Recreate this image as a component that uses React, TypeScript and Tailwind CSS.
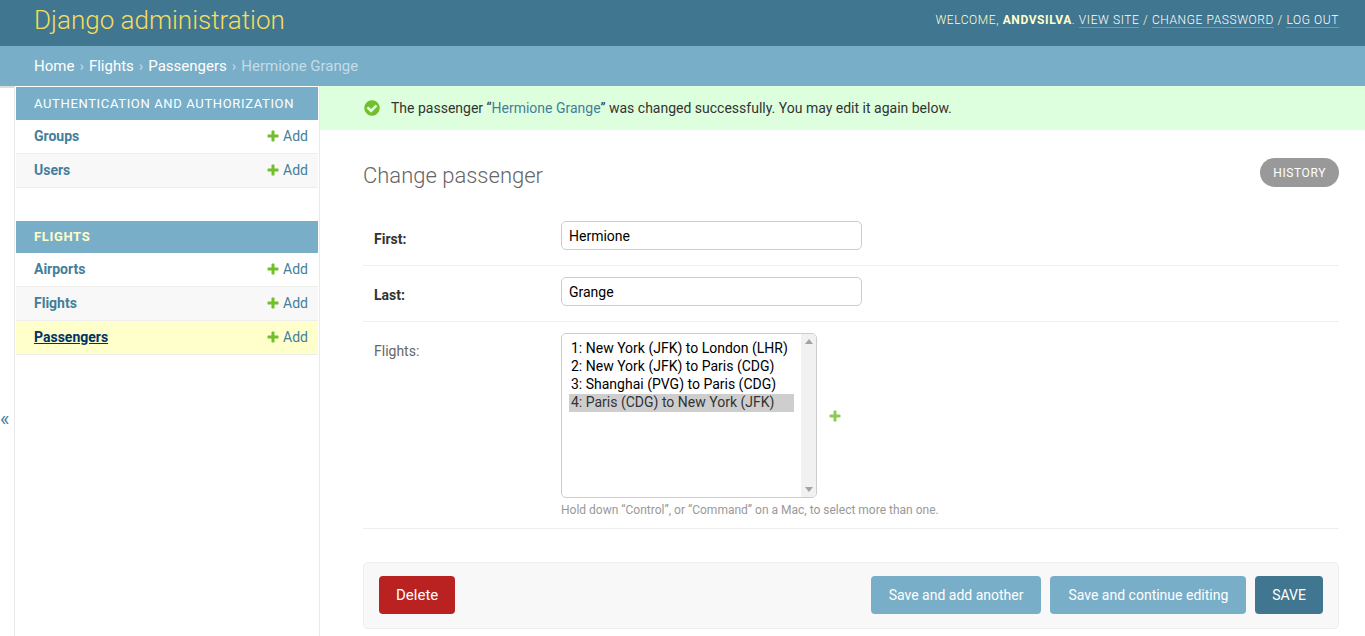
import React from 'react';

type Model = { name: string; current?: boolean };
type AppModule = { title: string; current?: boolean; models: Model[] };

const modules: AppModule[] = [
  { title: 'Authentication and Authorization', models: [{ name: 'Groups' }, { name: 'Users' }] },
  {
    title: 'Flights',
    current: true,
    models: [{ name: 'Airports' }, { name: 'Flights' }, { name: 'Passengers', current: true }],
  },
];

const flights = [
  '1: New York (JFK) to London (LHR)',
  '2: New York (JFK) to Paris (CDG)',
  '3: Shanghai (PVG) to Paris (CDG)',
  '4: Paris (CDG) to New York (JFK)',
];

function PlusIcon({ className }: { className: string }) {
  return (
    <svg viewBox="0 0 1792 1792" className={className} aria-hidden="true">
      <path
        fill="#70bf2b"
        d="M1600 796v192q0 40-28 68t-68 28h-416v416q0 40-28 68t-68 28h-192q-40 0-68-28t-28-68v-416h-416q-40 0-68-28t-28-68v-192q0-40 28-68t68-28h416v-416q0-40 28-68t68-28h192q40 0 68 28t28 68v416h416q40 0 68 28t28 68z"
      />
    </svg>
  );
}

function CheckIcon() {
  return (
    <svg viewBox="0 0 1792 1792" className="size-[18px]" aria-hidden="true">
      <path
        fill="#70bf2b"
        d="M1412 734q0-28-18-46l-91-90q-19-19-45-19t-45 19l-408 407-226-226q-19-19-45-19t-45 19l-91 90q-18 18-18 46 0 27 18 45l362 362q19 19 45 19 27 0 46-19l543-543q18-18 18-45zm252 162q0 209-103 385.500t-279.500 279.500-385.500 103-385.500-103-279.500-279.500-103-385.500 103-385.500 279.500-279.500 385.500-103 385.500 103 279.500 279.500 103 385.500z"
      />
    </svg>
  );
}

function NavModule({ title, current, models }: AppModule) {
  return (
    <section className="mb-[33px]">
      <h2
        className={`flex items-center bg-[#79aec8] px-[18px] text-[13px] uppercase tracking-wider ${
          current ? 'h-8 font-bold text-[#ffffcc]' : 'h-[33px] font-normal text-white'
        }`}
      >
        <a href="#">{title}</a>
      </h2>
      <ul>
        {models.map((m) => (
          <li
            key={m.name}
            className={`flex h-[34px] items-center justify-between border-b border-[#eeeeee] pb-[2px] pl-[18px] pr-[10px] text-[#447e9b] ${
              m.current ? 'bg-[#ffffcc]' : 'bg-white even:bg-[#f8f8f8]'
            }`}
          >
            <a href="#" className={`font-bold ${m.current ? 'text-[#003366] underline' : ''}`}>
              {m.name}
            </a>
            <a href="#" className="flex items-center gap-[3px]">
              <PlusIcon className="size-[14px]" />
              Add
            </a>
          </li>
        ))}
      </ul>
    </section>
  );
}

function TextRow({ id, label, value }: { id: string; label: string; value: string }) {
  return (
    <div className="flex h-14 items-start border-b border-[#eeeeee] pl-[11px] pt-[11px]">
      <label htmlFor={id} className="w-[187px] shrink-0 pt-[9px] font-bold">
        {label}
      </label>
      <input
        id={id}
        defaultValue={value}
        className="h-[29px] w-[301px] rounded-[5px] border border-[#cccccc] bg-white px-[7px] text-black"
      />
    </div>
  );
}

function UserLink({ children }: { children: React.ReactNode }) {
  return (
    <a href="#" className="border-b border-white/25 text-white">
      {children}
    </a>
  );
}

export default function App() {
  return (
    <div className="flex min-h-screen flex-col bg-white font-['Roboto',sans-serif] text-sm leading-[18px] text-[#333333]">
      <header className="flex h-[46px] items-center justify-between bg-[#417690] pb-[6px] pl-[34px] pr-[26px] text-[#ffffcc]">
        <h1 className="text-[26px] font-light leading-8 text-[#f5dd5d]">
          <a href="#">Django administration</a>
        </h1>
        <div className="text-xs font-light uppercase leading-[14px] tracking-wider">
          Welcome, <strong className="font-bold">andvsilva</strong>. <UserLink>View site</UserLink> /{' '}
          <UserLink>Change password</UserLink> / <UserLink>Log out</UserLink>
        </div>
      </header>

      <nav aria-label="Breadcrumbs" className="flex h-10 items-center gap-[5px] bg-[#79aec8] px-[34px] text-[15px] text-[#c4dce8]">
        <a href="#" className="text-white">Home</a>
        <span>›</span>
        <a href="#" className="text-white">Flights</a>
        <span>›</span>
        <a href="#" className="text-white">Passengers</a>
        <span>›</span>
        <span>Hermione Grange</span>
      </nav>

      <div className="flex flex-1">
        <button
          type="button"
          aria-label="Toggle navigation"
          className="flex w-[15px] shrink-0 items-center justify-start border-r border-t-2 border-r-[#eaeaea] border-t-[#dddddd] pt-[114px] text-[20px] leading-6 text-[#447e9b]"
        >
          «
        </button>
        <nav aria-label="Models" className="w-[305px] shrink-0 border-r border-[#eaeaea] px-px pt-px">
          {modules.map((m) => (
            <NavModule key={m.title} {...m} />
          ))}
        </nav>

        <main className="min-w-0 flex-1">
          <p className="flex h-11 items-center gap-[10px] bg-[#ddffdd] pl-[43px] pr-[26px]">
            <CheckIcon />
            <span>
              The passenger “<a href="#" className="text-[#447e9b]">Hermione Grange</a>” was changed
              successfully. You may edit it again below.
            </span>
          </p>

          <div className="pb-[7px] pl-[43px] pr-[26px] pt-7">
            <div className="flex items-start justify-between">
              <h2 className="pt-[6px] text-[22px] font-light leading-[23px] text-[#666666]">Change passenger</h2>
              <a
                href="#"
                className="flex h-[29px] items-center rounded-full bg-[#999999] px-[13px] text-xs uppercase tracking-wider text-white"
              >
                History
              </a>
            </div>

            <form className="pt-[23px]" onSubmit={(e) => e.preventDefault()}>
              <TextRow id="first" label="First:" value="Hermione" />
              <TextRow id="last" label="Last:" value="Grange" />
              <div className="flex items-start border-b border-[#eeeeee] pb-[9px] pl-[11px] pt-[11px]">
                <label htmlFor="flights" className="w-[187px] shrink-0 pt-[9px] text-[#666666]">
                  Flights:
                </label>
                <div>
                  <div className="flex items-center gap-[11px]">
                    <div className="relative">
                      <select
                        id="flights"
                        multiple
                        defaultValue={[flights[3]]}
                        className="block h-[165px] w-[256px] rounded-[5px] border border-[#cccccc] bg-white py-[6px] pl-[7px] pr-[22px] text-black"
                      >
                        {flights.map((f) => (
                          <option key={f} value={f} className="h-[18px] px-[2px] leading-[18px] checked:text-[#333333]">
                            {f}
                          </option>
                        ))}
                      </select>
                      <div
                        aria-hidden="true"
                        className="pointer-events-none absolute inset-y-px right-px flex w-[15px] flex-col items-center justify-between rounded-r bg-[#f1f1f1] py-[5px]"
                      >
                        <svg viewBox="0 0 8 5" className="h-[5px] w-2">
                          <path d="M0 5L4 0L8 5Z" fill="#a3a3a3" />
                        </svg>
                        <svg viewBox="0 0 8 5" className="h-[5px] w-2">
                          <path d="M0 0L4 5L8 0Z" fill="#a3a3a3" />
                        </svg>
                      </div>
                    </div>
                    <a href="#" aria-label="Add another flight" className="pt-px opacity-80">
                      <PlusIcon className="size-[14px]" />
                    </a>
                  </div>
                  <p className="pt-[3px] text-xs leading-[18px] text-[#999999]">
                    Hold down “Control”, or “Command” on a Mac, to select more than one.
                  </p>
                </div>
              </div>

              <div className="mt-[33px] flex items-center gap-[9px] rounded-[5px] border border-[#eeeeee] bg-[#f8f8f8] px-[15px] pb-[14px] pt-[13px] text-white">
                <a href="#" className="mr-auto flex h-[38px] items-center rounded bg-[#ba2121] px-[17px] text-[15px]">
                  Delete
                </a>
                <button className="h-[38px] rounded bg-[#79aec8] px-[18px]">Save and add another</button>
                <button className="h-[38px] rounded bg-[#79aec8] px-[18px]">Save and continue editing</button>
                <button className="h-[38px] rounded bg-[#417690] px-[17px] uppercase">Save</button>
              </div>
            </form>
          </div>
        </main>
      </div>
    </div>
  );
}
